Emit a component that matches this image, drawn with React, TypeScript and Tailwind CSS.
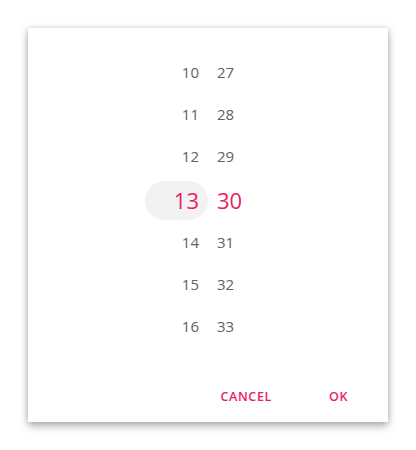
export default function App() {
  const hours = [10, 11, 12, 13, 14, 15, 16];
  const mins = [27, 28, 29, 30, 31, 32, 33];
  const font = { fontFamily: '"Open Sans", "Noto Sans", sans-serif' };
  return (
    <div className="w-[416px] h-[450px] bg-white pt-[28px] pl-[28px]" style={font}>
      <div className="w-[360px] h-[394px] bg-white shadow-[0_4px_8px_rgba(0,0,0,0.3),0_0_6px_rgba(0,0,0,0.12)] flex flex-col">
        <div className="pt-[23px] flex justify-center">
          <div className="flex flex-col w-[63px] ml-[-63px]">
            {hours.map((h) => (
              <div key={h} className={(h === 13 ? "h-[44px] pt-[2px] " : "h-[42px] ") + "flex items-center justify-end"}>
                {h === 13 ? (
                  <div className="w-[63px] h-[39px] rounded-full bg-[#f2f2f2] flex items-center justify-end pr-[9px] text-[22px] text-[#e91e63]">
                    {h}
                  </div>
                ) : (
                  <span className="pr-[9px] text-[15px] text-[#616161]">{h}</span>
                )}
              </div>
            ))}
          </div>
          <div className="flex flex-col w-[63px] mr-[-63px] pl-[9px]">
            {mins.map((m) => (
              <div key={m} className={(m === 30 ? "h-[44px] pt-[2px] " : "h-[42px] ") + "flex items-center"}>
                {m === 30 ? (
                  <span className="text-[22px] text-[#e91e63]">{m}</span>
                ) : (
                  <span className="text-[15px] text-[#616161]">{m}</span>
                )}
              </div>
            ))}
          </div>
        </div>
        <div className="mt-auto mb-[7px] h-[36px] flex items-center justify-end pr-[40px] gap-[57px]">
          <span className="text-[12.5px] font-semibold tracking-[0.05em] text-[#e91e63]">CANCEL</span>
          <span className="text-[12.5px] font-semibold tracking-[0.05em] text-[#e91e63]">OK</span>
        </div>
      </div>
    </div>
  );
}
